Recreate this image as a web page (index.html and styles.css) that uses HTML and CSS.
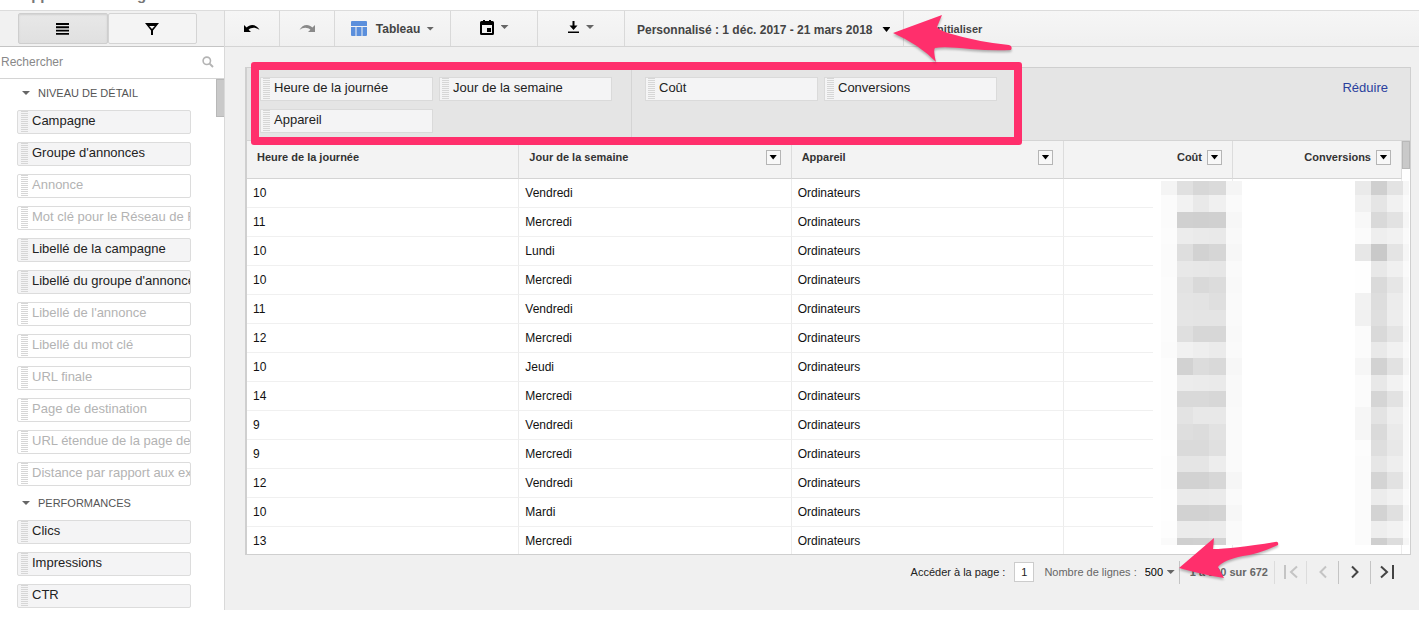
FILE: index.html
```html
<!DOCTYPE html>
<html lang="fr">
<head>
<meta charset="utf-8">
<title>Éditeur de rapports</title>
<link rel="stylesheet" href="styles.css">
</head>
<body>
<header class="title-bar"><h1 class="report-title">Rapport non enregistré</h1></header>
<div class="app">
  <aside class="sidebar">
    <div class="side-tabs">
      <button class="side-tab side-tab-active" aria-label="Champs">
        <svg width="13" height="12" viewBox="0 0 13 12"><path d="M0 1h13M0 4.300h13M0 7.600h13M0 10.900h13" stroke="#000" stroke-width="1.900"/></svg>
      </button>
      <button class="side-tab" aria-label="Filtres">
        <svg width="14" height="12" viewBox="0 0 14 12"><path d="M0 0h14L8 7.500V12H6V7.500zM4.200 3L7 6 9.800 3z" fill="#000" fill-rule="evenodd"/></svg>
      </button>
    </div>
    <label class="search">
      <input class="search-input" type="text" placeholder="Rechercher" aria-label="Rechercher">
      <svg width="12" height="12" viewBox="0 0 12 12" fill="none" stroke="#b4b4b4"><circle cx="4.800" cy="4.800" r="3.700" stroke-width="1.600"/><path d="M7.600 7.600L11 11" stroke-width="2"/></svg>
    </label>
    <div class="fields">
      <div class="field-list">
        <h2 class="group-title"><i class="caret"></i>NIVEAU DE DÉTAIL</h2>
        <div class="chip">Campagne</div>
        <div class="chip">Groupe d'annonces</div>
        <div class="chip chip-off">Annonce</div>
        <div class="chip chip-off">Mot clé pour le Réseau de Recherche</div>
        <div class="chip">Libellé de la campagne</div>
        <div class="chip">Libellé du groupe d'annonces</div>
        <div class="chip chip-off">Libellé de l'annonce</div>
        <div class="chip chip-off">Libellé du mot clé</div>
        <div class="chip chip-off">URL finale</div>
        <div class="chip chip-off">Page de destination</div>
        <div class="chip chip-off">URL étendue de la page de destination</div>
        <div class="chip chip-off">Distance par rapport aux extensions</div>
        <h2 class="group-title"><i class="caret"></i>PERFORMANCES</h2>
        <div class="chip">Clics</div>
        <div class="chip">Impressions</div>
        <div class="chip">CTR</div>
      </div>
      <div class="side-scroll"></div>
    </div>
  </aside>

  <main class="main">
    <nav class="toolbar">
      <button class="tool tool-undo" aria-label="Annuler">
        <svg width="16" height="10" viewBox="0 0 16 10"><path d="M0 1v7h7L4.600 5.700C7.500 3 12 3 15.500 6 13 .5 6.500-.8 2.600 3.500z" fill="#000"/></svg>
      </button>
      <button class="tool tool-undo" aria-label="Rétablir">
        <svg width="16" height="10" viewBox="0 0 16 10"><path d="M16 1v7H9l2.400-2.300C8.500 3 4 3 .5 6 3 .5 9.500-.8 13.400 3.500z" fill="#8a8a8a"/></svg>
      </button>
      <button class="tool tool-table">
        <svg width="16" height="15" viewBox="0 0 16 15" fill="#5b8fdc"><path d="M1 0h14q1 0 1 1v4H0V1q0-1 1-1zM0 6h4.500v9H1q-1 0-1-1zM5.500 6h5v9h-5zM11.500 6H16v8q0 1-1 1h-3.500z"/></svg>
        <span>Tableau</span><i class="caret"></i>
      </button>
      <button class="tool tool-icon" aria-label="Calendrier">
        <svg width="14" height="15" viewBox="0 0 14 15"><path d="M1.500 1H3V0h2v1h4V0h2v1h1.500Q14 1 14 2.500v11q0 1.500-1.500 1.500h-11Q0 15 0 13.500v-11Q0 1 1.500 1zM2 5v8h10V5zM7 8h4v4H7z" fill="#000" fill-rule="evenodd"/></svg>
        <i class="caret"></i>
      </button>
      <button class="tool tool-icon" aria-label="Télécharger">
        <svg width="11" height="12" viewBox="0 0 11 12"><path d="M4.500 0h2v4.500h3L5.500 9l-4-4.500h3zM0 10.500h11V12H0z" fill="#000"/></svg>
        <i class="caret"></i>
      </button>
      <div class="tool-wrap">
        <button class="tool tool-date"><span>Personnalisé : 1 déc. 2017 - 21 mars 2018</span><i class="caret caret-dark"></i></button>
        <svg class="arrow arrow-date" width="124" height="54" viewBox="0 0 124 54"><path d="M1 21L50 3L45 15Q47 18 56 21Q86 30 117 33Q121 34 119 38Q100 39 78 37Q52 34 43 36Q41 38 44 50Q28 33 1 21z" fill="#ff2f6c"/></svg>
      </div>
      <button class="tool tool-reset">Réinitialiser</button>
    </nav>

    <section class="report">
      <div class="shelf">
        <div class="shelf-group shelf-rows">
          <div class="chip chip-shelf">Heure de la journée</div>
          <div class="chip chip-shelf">Jour de la semaine</div>
          <div class="chip chip-shelf">Appareil</div>
        </div>
        <div class="shelf-group shelf-values">
          <div class="chip chip-shelf">Coût</div>
          <div class="chip chip-shelf">Conversions</div>
        </div>
        <a class="collapse" href="#">Réduire</a>
      </div>
      <div class="grid-wrap">
        <table class="grid">
          <colgroup><col><col><col><col class="col-num"><col class="col-num"></colgroup>
          <thead><tr>
            <th><div class="head">Heure de la journée</div></th>
            <th><div class="head">Jour de la semaine<button class="menu" aria-label="Trier par jour"><i class="caret caret-dark"></i></button></div></th>
            <th><div class="head">Appareil<button class="menu" aria-label="Trier par appareil"><i class="caret caret-dark"></i></button></div></th>
            <th><div class="head head-num">Coût<button class="menu" aria-label="Trier par coût"><i class="caret caret-dark"></i></button></div></th>
            <th><div class="head head-num">Conversions<button class="menu" aria-label="Trier par conversions"><i class="caret caret-dark"></i></button></div></th>
          </tr></thead>
          <tbody>
            <tr><td>10</td><td>Vendredi</td><td>Ordinateurs</td><td></td><td></td></tr>
            <tr><td>11</td><td>Mercredi</td><td>Ordinateurs</td><td></td><td></td></tr>
            <tr><td>10</td><td>Lundi</td><td>Ordinateurs</td><td></td><td></td></tr>
            <tr><td>10</td><td>Mercredi</td><td>Ordinateurs</td><td></td><td></td></tr>
            <tr><td>11</td><td>Vendredi</td><td>Ordinateurs</td><td></td><td></td></tr>
            <tr><td>12</td><td>Mercredi</td><td>Ordinateurs</td><td></td><td></td></tr>
            <tr><td>10</td><td>Jeudi</td><td>Ordinateurs</td><td></td><td></td></tr>
            <tr><td>14</td><td>Mercredi</td><td>Ordinateurs</td><td></td><td></td></tr>
            <tr><td>9</td><td>Vendredi</td><td>Ordinateurs</td><td></td><td></td></tr>
            <tr><td>9</td><td>Mercredi</td><td>Ordinateurs</td><td></td><td></td></tr>
            <tr><td>12</td><td>Vendredi</td><td>Ordinateurs</td><td></td><td></td></tr>
            <tr><td>10</td><td>Mardi</td><td>Ordinateurs</td><td></td><td></td></tr>
            <tr><td>13</td><td>Mercredi</td><td>Ordinateurs</td><td></td><td></td></tr>
          </tbody>
        </table>
        <div class="grid-scroll"><div class="grid-thumb"></div></div>
        <svg class="mosaic" id="mosaic" width="256" height="364" viewBox="0 0 256 364" shape-rendering="crispEdges"></svg>
      </div>
      <div class="frame"></div>
    </section>

    <footer class="pager">
      <label class="page-label" for="page">Accéder à la page :</label>
      <input class="page-input" id="page" type="text" value="1">
      <label class="rows-label" for="rows">Nombre de lignes :</label>
      <span class="rows-box"><select class="rows-select" id="rows"><option>500</option></select><i class="caret"></i></span>
      <div class="range">
        <span>1 à 500 sur 672</span>
        <svg class="arrow arrow-rows" width="104" height="46" viewBox="0 0 104 46"><path d="M1 33L36 3L35 14Q54 14 97 7Q101 6 100 10Q80 19 65 21Q45 25 40 32L46 43Q26 40 1 33z" fill="#ff2f6c"/></svg>
      </div>
      <button class="page-btn" aria-label="Première page" disabled><svg width="14" height="14" viewBox="0 0 14 14"><path d="M1 0v14M13 1.500L7 7l6 5.500"/></svg></button>
      <button class="page-btn" aria-label="Page précédente" disabled><svg width="8" height="14" viewBox="0 0 8 14"><path d="M7 1.500L1.500 7 7 12.500"/></svg></button>
      <button class="page-btn" aria-label="Page suivante"><svg width="8" height="14" viewBox="0 0 8 14"><path d="M1 1.500L6.500 7 1 12.500"/></svg></button>
      <button class="page-btn" aria-label="Dernière page"><svg width="14" height="14" viewBox="0 0 14 14"><path d="M13 0v14M1 1.500L7 7l-6 5.500"/></svg></button>
    </footer>
  </main>
</div>
<script src="mosaic.js"></script>
</body>
</html>
```
FILE: styles.css
```css
* { box-sizing: border-box; }
body { margin: 0; background: #fff; color: #222; font: 12px/16px "Liberation Sans", Arial, sans-serif; }
button, input, select { font: inherit; color: inherit; margin: 0; padding: 0; border: 0; border-radius: 0; background: none; }
svg { display: block; flex: none; }

.title-bar { height: 10px; display: flex; align-items: flex-end; overflow: hidden; padding: 0 0 7px 12px; }
.report-title { margin: 0; font-size: 15px; line-height: 16px; color: #777; }
.app { display: flex; align-items: stretch; }

.caret { display: block; flex: none; width: 8px; height: 4px; background: #666; clip-path: polygon(0 0, 100% 0, 50% 100%); }
.caret-dark { height: 5px; background: #000; }

/* Sidebar */
.sidebar { width: 225px; flex: none; border-right: 1px solid #d9d9d9; display: flex; flex-direction: column; }
.side-tabs { display: flex; height: 37px; padding: 2px 27px 2px 18px; background: #f1f1f1; border-top: 1px solid #dcdcdc; border-bottom: 1px solid #c4c4c4; }
.side-tab { flex: 1; display: flex; align-items: center; justify-content: center; border: 1px solid #d4d4d4; border-radius: 2px; background: #f4f4f4; }
.side-tab-active { background: linear-gradient(#e8e8e8, #e0e0e0); border-color: #cecece; box-shadow: inset 0 1px 2px #d0d0d0; }
.search { display: flex; align-items: center; height: 32px; padding: 0 10px 2px 1px; border-bottom: 1px solid #d4d4d4; }
.search-input { flex: 1; min-width: 0; outline: 0; }
.search-input::placeholder { color: #888; opacity: 1; }
.fields { display: flex; justify-content: space-between; }
.field-list { display: flex; flex-direction: column; gap: 8px; padding: 5px 0 2px 17px; }
.side-scroll { width: 8px; height: 38px; background: #c9c9c9; border: 1px solid #b8b8b8; border-right: 0; }
.group-title { display: flex; align-items: center; gap: 8px; margin: 0; padding-left: 5px; height: 18px; font-size: 11px; font-weight: normal; color: #555; }

.chip { width: 174px; height: 24px; padding: 0 0 0 14px; overflow: hidden; white-space: nowrap; font-size: 13px; line-height: 20px; color: #222; border: 1px solid #dcdcdc; border-radius: 2px;
  background: repeating-linear-gradient(#d6d6d6 0 1px, transparent 1px 2px) 3px 0 / 7px 100% no-repeat #f4f4f5; }
.chip-off { color: #b3b3b3; background-color: #fff; }
.chip-shelf { width: 173px; padding-left: 13px; border-color: #dadada; border-radius: 0; background-position: 2px 0; }

/* Toolbar */
.main { flex: 1; min-width: 0; background: #f0f0f0; display: flex; flex-direction: column; }
.toolbar { display: flex; height: 37px; background: linear-gradient(#f6f6f6, #f0f0f0); border-top: 1px solid #dcdcdc; border-bottom: 1px solid #d4d4d4; font-weight: bold; color: #444; }
.tool { display: flex; height: 35px; align-items: center; justify-content: center; gap: 7px; border-right: 1px solid #d9d9d9; font-weight: bold; white-space: nowrap; }
.tool-undo { width: 55px; }
.tool-table { width: 116px; gap: 9px; }
.tool-table .caret { margin-left: -3px; }
.tool-icon { width: 87px; padding-bottom: 3px; }
.tool-wrap { position: relative; }
.tool-date { width: 279px; justify-content: flex-start; gap: 10px; padding: 2px 0 0 12px; }
.tool-reset { border: 0; padding: 1px 0 0 16px; font-size: 11px; }
.arrow { position: absolute; pointer-events: none; z-index: 3; filter: drop-shadow(0 2px 1px #0004); }
.arrow-date { left: 267px; top: 1px; }

/* Report panel */
.report { position: relative; margin: 20px 8px 0 20px; border: 1px solid #cfcfcf; border-left-width: 2px; background: #fff; }
.shelf { display: flex; background: #e5e5e5; border-bottom: 1px solid #d4d4d4; }
.shelf-group { display: flex; flex-wrap: wrap; align-content: flex-start; gap: 8px 6px; padding: 9px 0 7px 13px; }
.shelf-rows { width: 385px; border-right: 1px solid #d4d4d4; }
.shelf-values { flex: 1; }
.collapse { padding: 12px 22px 0 0; font-size: 13px; color: #2a3f9d; text-decoration: none; }
.frame { position: absolute; left: 4px; top: -6px; width: 771px; height: 83px; border: 8px solid #ff2f6c; border-radius: 3px; pointer-events: none; }

.grid-wrap { position: relative; display: flex; }
.grid { flex: 1; table-layout: fixed; border-collapse: separate; border-spacing: 0; width: 100%; }
.col-num { width: 169px; }
.grid th { height: 38px; padding: 0 10px; vertical-align: top; text-align: left; background: #f3f3f3; border-right: 1px solid #dcdcdc; border-bottom: 1px solid #d4d4d4; font-size: 11px; color: #333; }
.head { display: flex; justify-content: space-between; align-items: center; height: 32px; }
.head-num { justify-content: flex-end; gap: 5px; }
.menu { display: flex; align-items: center; justify-content: center; width: 15px; height: 15px; border: 1px solid #b5b5b5; background: #f8f8f8; }
.grid td { height: 29px; padding: 0 6px; border-right: 1px solid #ececec; border-bottom: 1px solid #f0f0f0; color: #111; }
.grid tbody tr:last-child td { height: 27px; border-bottom: 0; }
.grid-scroll { width: 8px; flex: none; }
.grid-thumb { height: 28px; background: #c9c9c9; border: 1px solid #b8b8b8; }
.mosaic { position: absolute; right: 1px; top: 40px; }

/* Pager */
.pager { display: flex; align-items: center; height: 55px; padding: 0 17px 21px 0; justify-content: flex-end; white-space: nowrap; }
.pager label { font-size: 11px; }
.rows-label { color: #666; }
.page-input { width: 20px; height: 20px; margin: 0 10px 0 9px; border: 1px solid #ccc; background: #fff; text-align: center; font-size: 11px; }
.rows-box { display: flex; align-items: center; height: 23px; margin-left: 8px; padding-right: 4px; border-right: 1px solid #c4c4c4; }
.rows-select { appearance: none; width: 22px; font-size: 11px; color: #000; }
.range { position: relative; padding: 0 6px 0 10px; font-size: 11px; font-weight: bold; color: #666; }
.arrow-rows { left: -2px; top: -29px; }
.page-btn { display: flex; align-items: center; justify-content: center; width: 32px; height: 23px; border-left: 1px solid #c4c4c4; }
.page-btn path { fill: none; stroke: #444; stroke-width: 2; }
.page-btn:disabled { border-color: #dcdcdc; }
.page-btn:disabled path { stroke: #c4c4c4; }
```
FILE: mosaic.js
```js
// Pixelated mask over the confidential figures: one line per band of cells,
// grey levels in hex for the cost columns, then the conversion columns.
const bands = [
  [0, "f4 e0 d7 da f5 ea cf e3 f6"], [14, "fb f2 e9 f0 fa f1 e5 f1 fa"],
  [31, "fb d0 cf d0 f7 f8 d9 e2 f6"], [47, "fc ec ea e9 f9 fb ee f1 fa"],
  [63, "fb de d2 d6 f7 e7 c9 e4 f6"], [80, "fb e8 e7 e6 fa fe e8 f0 fa"],
  [96, "fc e2 d9 dc f9 fe da e6 f7"], [112, "fc e4 e3 df fa f2 dd ec f8"],
  [129, "fc e5 e4 e4 fa f1 df ed f8"], [145, "fc df d7 d7 f9 fb d9 e4 f6"],
  [161, "fb f1 ee eb fa fb e9 f1 f9"], [177, "fd d2 dc d9 f7 f6 d2 e2 f5"],
  [194, "fd ec eb ea f9 fb e8 f2 fa"], [210, "fd d9 d9 d7 f9 fb d5 e2 f6"],
  [226, "fd e3 e8 e8 fa f6 e3 ee f8"], [243, "fd de dc e2 fa f6 da ea f8"],
  [259, "fe da da e0 fa fc de e8 f8"], [275, "fd e5 e5 ed fa fb e6 ee f8"],
  [291, "fd d2 d2 d7 f6 fb d4 e2 f6"], [308, "fe ea ea eb fa fb ec f1 fa"],
  [324, "fe d2 d2 d4 f7 fb d3 e0 f6"], [340, "fd eb eb ec fa fb ee f2 fa"],
  [357, "fa cf d0 d3 fa fb cf dd f6"]
];
const columns = [[8, 16], [24, 16], [40, 16], [56, 17], [73, 16], [202, 16], [218, 16], [234, 16], [250, 6]];
const svg = document.getElementById("mosaic");
function cell(x, y, w, h, fill) {
  const r = document.createElementNS("http://www.w3.org/2000/svg", "rect");
  Object.entries({ x, y, width: w, height: h, fill }).forEach(([k, v]) => r.setAttribute(k, v));
  svg.append(r);
}
cell(0, 0, 256, 364, "#fff");
bands.forEach(([y, levels], i) => {
  const end = i + 1 < bands.length ? bands[i + 1][0] : 364;
  levels.split(" ").forEach((g, c) => cell(columns[c][0], y, columns[c][1], end - y, "#" + g + g + g));
});
```
